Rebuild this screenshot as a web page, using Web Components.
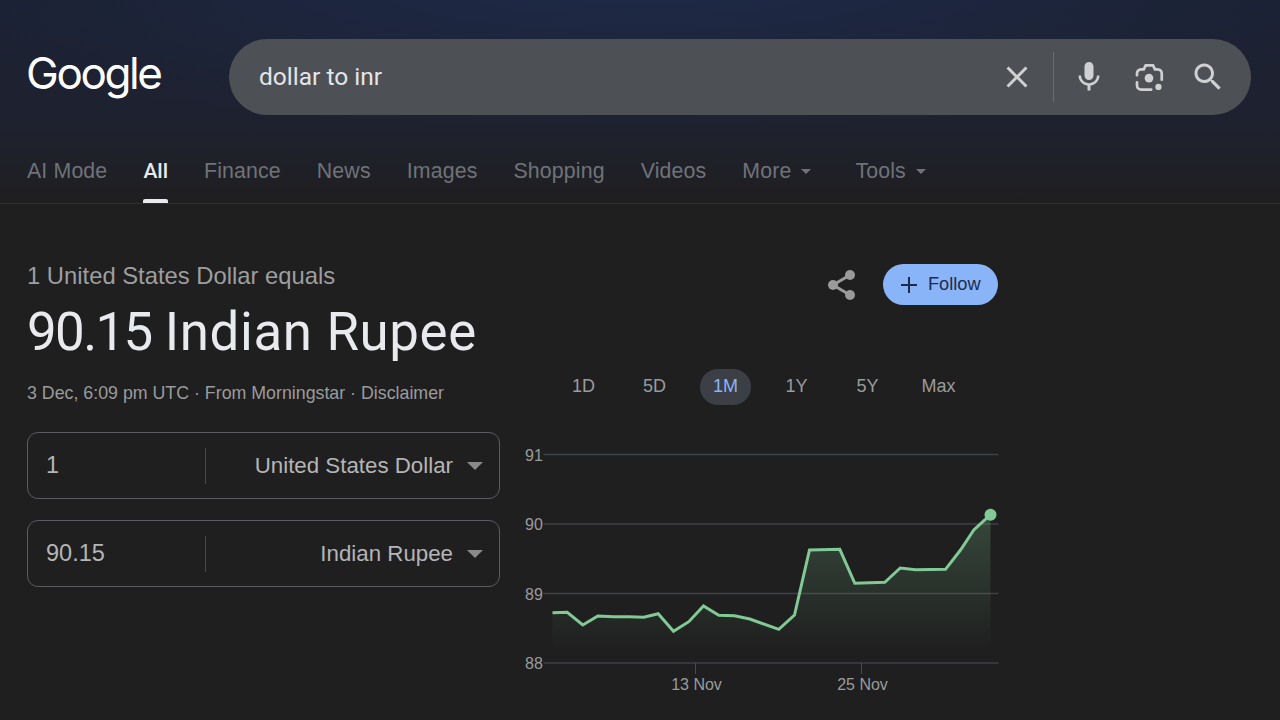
<!DOCTYPE html>
<html lang="en">
<head>
<meta charset="utf-8">
<title>dollar to inr</title>
<style>
html, body { margin: 0; padding: 0; }
body { width: 1280px; height: 720px; overflow: hidden; background: #1f1f1f; font-family: "Liberation Sans", Arial, sans-serif; }
</style>
</head>
<body>
<search-header></search-header>
<main-result></main-result>

<script>
const ICONS = {
  close: 'M19 6.41 17.59 5 12 10.59 6.41 5 5 6.41 10.59 12 5 17.59 6.41 19 12 13.41 17.59 19 19 17.59 13.41 12z',
  mic: 'M12 14c1.66 0 3-1.34 3-3V5c0-1.66-1.34-3-3-3S9 3.34 9 5v6c0 1.66 1.34 3 3 3zm5.3-3c0 3-2.54 5.1-5.3 5.1S6.7 14 6.7 11H5c0 3.41 2.72 6.23 6 6.72V21h2v-3.28c3.28-.48 6-3.3 6-6.72h-1.7z',
  search: 'M15.5 14h-.79l-.28-.27C15.41 12.59 16 11.11 16 9.5 16 5.91 13.09 3 9.5 3S3 5.91 3 9.5 5.91 16 9.5 16c1.61 0 3.09-.59 4.23-1.57l.27.28v.79l5 4.99L20.49 19l-4.99-5zm-6 0C7.01 14 5 11.99 5 9.5S7.01 5 9.5 5 14 7.01 14 9.5 11.99 14 9.5 14z',
};

class SearchHeader extends HTMLElement {
  constructor() {
    super();
    const shadow = this.attachShadow({ mode: 'open' });
    shadow.innerHTML = `
    <style>
    :host {
      display: block;
      box-sizing: border-box;
      height: 204px;
      padding: 39px 29px 0 27px;
      border-bottom: 1px solid #2e2f31;
      background:
        radial-gradient(ellipse 800px 150px at 640px -20px, rgba(32, 50, 92, .55), rgba(32, 50, 92, 0)),
        linear-gradient(#1b2030, #1e2230 115px, #1f2026 175px, #1f1f20 203px);
    }
    .top { display: flex; align-items: center; gap: 68px; height: 76px; }
    .logo {
      width: 134px;
      color: #fff;
      font: 400 44px/1 Inter, sans-serif;
      letter-spacing: -2.400px;
      white-space: nowrap;
      position: relative;
      top: -4px;
      left: -1px;
    }
    .box {
      flex: 1;
      display: flex;
      align-items: center;
      height: 76px;
      border-radius: 38px;
      background: #4d5055;
      padding: 0 25px 0 30px;
      color: #e3e5e8;
      font: 400 24.500px/74px Roboto, sans-serif;
    }
    .q { flex: 1; position: relative; top: 0; }
    svg { display: block; width: 36px; height: 36px; fill: #cfd0d2; }
    .sep { width: 1px; height: 50px; background: #6a6d72; margin: 0 17px 0 18px; }
    .icons { display: flex; gap: 23.500px; }
    nav { display: flex; gap: 36px; margin-top: 38px; }
    </style>
    <div class="top">
      <div class="logo">Google</div>
      <div class="box">
        <span class="q">dollar to inr</span>
        <svg viewBox="0 0 24 24"><path d="${ICONS.close}"/></svg>
        <div class="sep"></div>
        <div class="icons">
          <svg viewBox="0 0 24 24"><path d="${ICONS.mic}"/></svg>
          <svg viewBox="0 0 24 24">
            <path fill="none" stroke="#cfd0d2" stroke-width="1.800" stroke-linecap="round" d="M4 10.800V9.600A2.700 2.700 0 0 1 6.700 6.900H8.500L9.800 4.200H14.700L16 6.900H17.800A2.700 2.700 0 0 1 20.500 9.600V13.800M4 15.600V17.700A2.700 2.700 0 0 0 6.700 20.400H13.500"/>
            <circle cx="12" cy="12.700" r="2.900"/>
            <circle cx="18.300" cy="18.600" r="2.100"/>
          </svg>
          <svg viewBox="0 0 24 24"><path d="${ICONS.search}"/></svg>
        </div>
      </div>
    </div>
    <nav>
      <nav-tab>AI Mode</nav-tab>
      <nav-tab active>All</nav-tab>
      <nav-tab>Finance</nav-tab>
      <nav-tab>News</nav-tab>
      <nav-tab>Images</nav-tab>
      <nav-tab>Shopping</nav-tab>
      <nav-tab>Videos</nav-tab>
      <nav-tab caret>More</nav-tab>
      <nav-tab caret style="margin-left:8px">Tools</nav-tab>
    </nav>`;
  }
}

class NavTab extends HTMLElement {
  constructor() {
    super();
    const shadow = this.attachShadow({ mode: 'open' });
    shadow.innerHTML = `
    <style>
    :host {
      display: flex;
      align-items: center;
      gap: 10px;
      height: 50px;
      box-sizing: border-box;
      padding-bottom: 14px;
      color: #6f7379;
      font: 400 21.300px "Liberation Sans", Arial, sans-serif;
      letter-spacing: .15px;
      white-space: nowrap;
      position: relative;
    }
    :host([active]) { color: #e8eaed; font-family: Roboto, sans-serif; font-weight: 500; font-size: 21px; letter-spacing: 0; }
    :host([active])::after {
      content: "";
      position: absolute;
      left: 0; right: 0; bottom: 0;
      height: 4px;
      background: #e8eaed;
      border-radius: 2px 2px 0 0;
    }
    i { display: none; width: 0; height: 0; border: 5px solid transparent; border-top-color: #6f7379; border-bottom: 0; }
    :host([caret]) i { display: block; }
    </style>
    <slot></slot><i></i>`;
  }
}

class MainResult extends HTMLElement {
  constructor() {
    super();
    const shadow = this.attachShadow({ mode: 'open' });
    shadow.innerHTML = `
    <style>
    :host {
      display: grid;
      grid-template-columns: 473px 473px;
      column-gap: 25px;
      padding: 0 0 0 27px;
      font-family: "Liberation Sans", Arial, sans-serif;
    }
    .lead { margin-top: 59px; color: #9d9ea0; font-size: 23.800px; line-height: 26px; white-space: nowrap; }
    .big { margin-top: 13px; color: #e8eaed; font: 400 52.800px/60px Roboto, sans-serif; white-space: nowrap; }
    .big b { font-weight: 400; letter-spacing: -1.600px; }
    .big span { letter-spacing: .65px; }
    .meta { margin-top: 19px; color: #9a9b9d; font-size: 17.800px; line-height: 24px; white-space: nowrap; }
    .rows { display: flex; flex-direction: column; gap: 21px; margin-top: 27px; }
    .right { display: flex; flex-direction: column; padding-top: 60px; }
    .actions { display: flex; align-items: center; justify-content: flex-end; gap: 25px; height: 41px; }
    .actions svg { width: 32px; height: 32px; display: block; }
    .follow {
      display: flex;
      align-items: center;
      gap: 11px;
      box-sizing: border-box;
      width: 115px;
      height: 41px;
      padding-left: 18px;
      border-radius: 21px;
      background: #8ab4f8;
      color: #1d2c4d;
      font: 18.200px/43px "Liberation Sans", Arial, sans-serif;
    }
    .follow svg { width: 16px; height: 16px; }
    </style>
    <section>
      <div class="lead">1 United States Dollar equals</div>
      <div class="big"><b>90.15</b> <span>Indian Rupee</span></div>
      <div class="meta">3 Dec, 6:09 pm UTC · From Morningstar · Disclaimer</div>
      <div class="rows">
        <currency-row value="1">United States Dollar</currency-row>
        <currency-row value="90.15">Indian Rupee</currency-row>
      </div>
    </section>
    <section class="right">
      <div class="actions">
        <svg viewBox="0 0 32 32">
          <path fill="none" stroke="#9a9a9a" stroke-width="3" d="M24 6 7 16l17 10"/>
          <circle cx="24" cy="6" r="5" fill="#9a9a9a"/>
          <circle cx="7" cy="16" r="5" fill="#9a9a9a"/>
          <circle cx="24" cy="26" r="5" fill="#9a9a9a"/>
        </svg>
        <div class="follow">
          <svg viewBox="0 0 16 16"><path fill="none" stroke="#1d2c4d" stroke-width="2" d="M8 0v16M0 8h16"/></svg>
          Follow
        </div>
      </div>
      <range-tabs></range-tabs>
      <rate-chart></rate-chart>
    </section>`;
  }
}

class CurrencyRow extends HTMLElement {
  constructor() {
    super();
    const shadow = this.attachShadow({ mode: 'open' });
    shadow.innerHTML = `
    <style>
    :host {
      display: flex;
      align-items: center;
      box-sizing: border-box;
      height: 67px;
      padding: 0 16px 0 18px;
      border: 1px solid #5a5c5f;
      border-radius: 11px;
      color: #b4b5b7;
      font-size: 22.300px;
    }
    .val { width: 159px; font-size: 23.500px; }
    .sep { width: 1px; height: 36px; background: #47484a; }
    .name { flex: 1; text-align: right; padding-right: 14px; }
    i { width: 0; height: 0; border: 8px solid transparent; border-top-color: #8a8a8a; border-bottom: 0; }
    </style>
    <div class="val"></div><div class="sep"></div><div class="name"><slot></slot></div><i></i>`;
    shadow.querySelector('.val').textContent = this.getAttribute('value');
  }
}

class RangeTabs extends HTMLElement {
  constructor() {
    super();
    const shadow = this.attachShadow({ mode: 'open' });
    const items = ['1D', '5D', '1M', '1Y', '5Y', 'Max'];
    shadow.innerHTML = `
    <style>
    :host {
      display: flex;
      margin: 64px 0 0 33px;
      gap: 20px;
      color: #9a9b9d;
      font-size: 18px;
    }
    span { display: flex; align-items: center; justify-content: center; box-sizing: border-box; width: 51px; height: 36px; padding-bottom: 1px; border-radius: 18px; }
    .on { background: #3c4046; color: #8ab4f8; }
    </style>
    ${items.map(t => `<span class="${t === '1M' ? 'on' : ''}">${t}</span>`).join('')}`;
  }
}

const RATES = [
  [552, 612.7], [566.7, 612.3], [582.3, 625], [597.3, 616], [613.3, 616.7], [628.3, 616.7],
  [643.3, 617.3], [657.7, 613.7], [673, 631.3], [688.3, 621.7], [703, 606], [718.3, 615.3],
  [734, 615.7], [749.3, 619], [778.3, 629.3], [794, 615], [809, 550], [839.3, 549.3],
  [854.3, 583.3], [884.3, 582.3], [899.7, 568], [915, 569.7], [945, 569.3], [960, 550],
  [973.3, 530], [990, 514.7],
];

class RateChart extends HTMLElement {
  constructor() {
    super();
    const shadow = this.attachShadow({ mode: 'open' });
    const pts = RATES.map(p => p.join(',')).join(' ');
    const grid = [[91, 454.5], [90, 524], [89, 593.5], [88, 663]];
    shadow.innerHTML = `
    <style>
    :host { display: block; margin-top: 20px; }
    svg { display: block; width: 478px; height: 280px; }
    text { font: 16px "Liberation Sans", Arial, sans-serif; fill: #9a9b9d; }
    </style>
    <svg viewBox="524.500 425 478 280">
      <defs>
        <linearGradient id="fade" gradientUnits="userSpaceOnUse" x1="0" y1="515" x2="0" y2="650">
          <stop offset="0" stop-color="#81c995" stop-opacity=".24"/>
          <stop offset="1" stop-color="#81c995" stop-opacity="0"/>
        </linearGradient>
      </defs>
      ${grid.map(([n, y]) => `
        <line x1="543" x2="998" y1="${y}" y2="${y}" stroke="#3e4145" stroke-width="1.500"/>
        <text x="524.500" y="${y + 6}">${n}</text>`).join('')}
      <polygon points="552,650 ${pts} 990,650" fill="url(#fade)"/>
      <path d="M695 663v11M861 663v11" stroke="#4a4c50" stroke-width="1"/>
      <text x="696" y="690" text-anchor="middle">13 Nov</text>
      <text x="862" y="690" text-anchor="middle">25 Nov</text>
      <polyline points="${pts}" fill="none" stroke="#81c995" stroke-width="3"/>
      <circle cx="990" cy="514.700" r="6" fill="#81c995"/>
    </svg>`;
  }
}

customElements.define('nav-tab', NavTab);
customElements.define('search-header', SearchHeader);
customElements.define('currency-row', CurrencyRow);
customElements.define('range-tabs', RangeTabs);
customElements.define('rate-chart', RateChart);
customElements.define('main-result', MainResult);
</script>
</body>
</html>
